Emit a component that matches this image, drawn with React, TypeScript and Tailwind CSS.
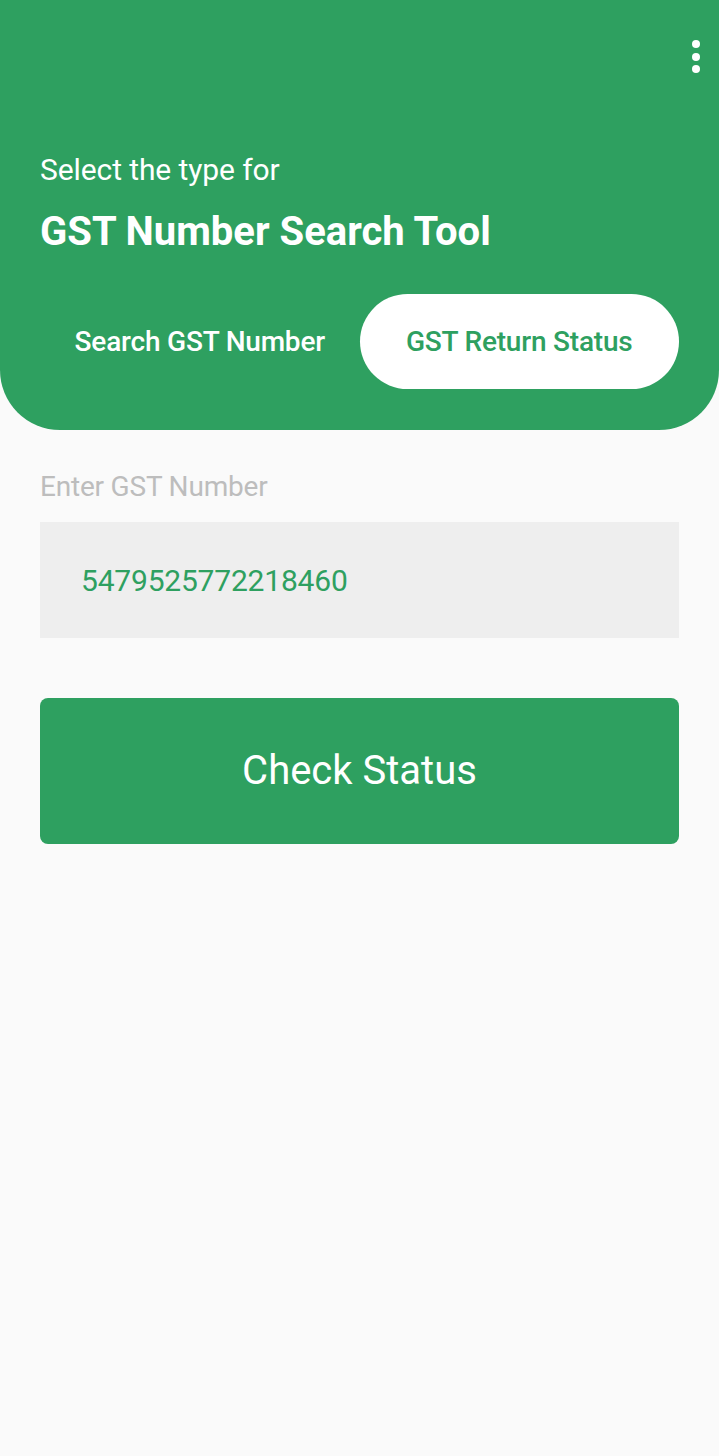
export default function App() {
  return (
    <div className="min-h-[1456px] w-[719px] bg-[#fafafa]" style={{ fontFamily: 'Roboto, "Noto Sans", sans-serif' }}>
      <div className="relative bg-[#2ea060] rounded-b-[60px] h-[430px] px-10 pt-[150px]">
        <div className="absolute right-[19px] top-[40px] flex flex-col gap-[4.5px]">
          <span className="block w-[8px] h-[8px] rounded-full bg-white" />
          <span className="block w-[8px] h-[8px] rounded-full bg-white" />
          <span className="block w-[8px] h-[8px] rounded-full bg-white" />
        </div>
        <div className="text-white text-[30px] leading-[40px] tracking-[-0.1px]">Select the type for</div>
        <div className="text-white text-[40px] font-bold leading-[50px] mt-[17px]">GST Number Search Tool</div>
        <div className="flex mt-[37px] h-[95px]">
          <div className="flex-1 flex items-center justify-center text-white text-[28px] font-medium tracking-[-0.2px]">Search GST Number</div>
          <div className="flex-1 flex items-center justify-center bg-white rounded-full text-[#2ea060] text-[28px] font-medium tracking-[-0.2px]">GST Return Status</div>
        </div>
      </div>
      <div className="px-10">
        <div className="mt-[39px] text-[#bdbdbd] text-[28px] leading-[36px] tracking-[-0.2px]">Enter GST Number</div>
        <div className="mt-[17px] h-[116px] bg-[#eeeeee] flex items-center px-[41px] text-[#2ea060] text-[30px] tracking-[-0.2px]">5479525772218460</div>
        <button className="mt-[60px] w-full h-[146px] bg-[#2ea060] rounded-[8px] text-white text-[40px] flex items-center justify-center">Check Status</button>
      </div>
    </div>
  );
}
